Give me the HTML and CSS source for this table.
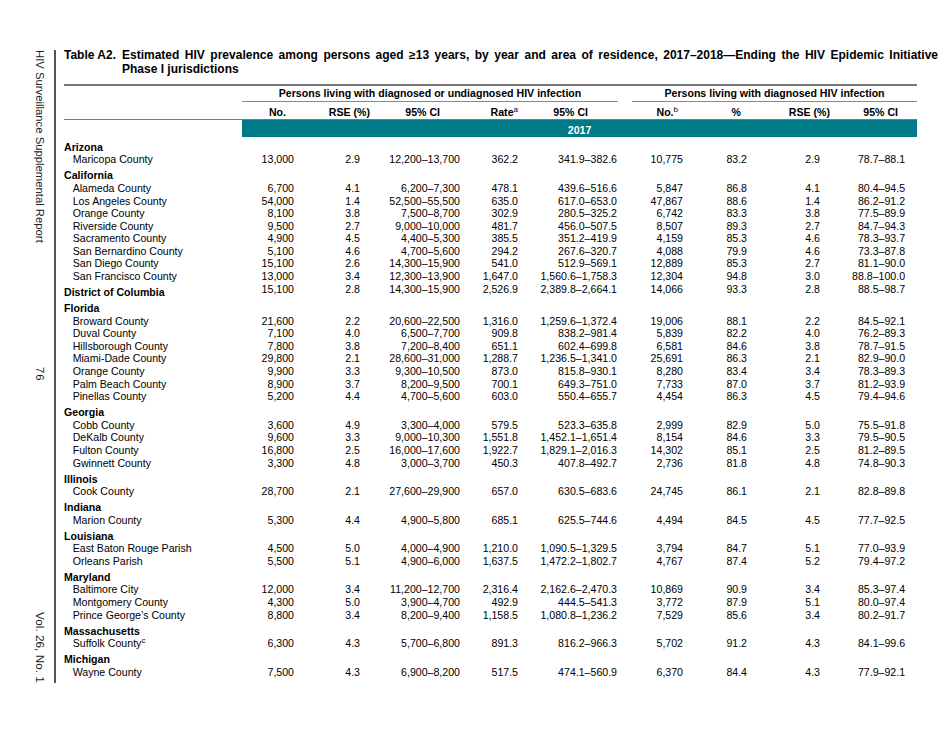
FILE: index.html
```html
<!DOCTYPE html>
<html lang="en">
<head>
<meta charset="utf-8">
<title>Table A2</title>
<link rel="stylesheet" href="styles.css">
</head>
<body>
<div class="page">
  <aside class="sidebar">
    <div class="side-text side-top">HIV Surveillance Supplemental Report</div>
    <div class="side-text side-num">76</div>
    <div class="side-text side-vol">Vol. 26, No. 1</div>
  </aside>
  <main class="main">
    <div class="title">
      <div class="title-label">Table A2.</div>
      <div class="title-text">
        <div class="title-line1">Estimated HIV prevalence among persons aged ≥13 years, by year and area of residence, 2017–2018—Ending the HIV Epidemic Initiative</div>
        <div>Phase I jurisdictions</div>
      </div>
    </div>
    <table class="data">
      <colgroup>
        <col class="w-name"><col class="w1"><col class="w2"><col class="w3"><col class="w4"><col class="w5"><col class="w6"><col class="w7"><col class="w8"><col class="w9">
      </colgroup>
      <thead>
        <tr class="grp-row">
          <th></th>
          <th colspan="5" class="grp grp1"><div>Persons living with diagnosed or undiagnosed HIV infection</div></th>
          <th colspan="4" class="grp grp2"><div>Persons living with diagnosed HIV infection</div></th>
        </tr>
        <tr class="col-row">
          <th></th>
          <th>No.</th>
          <th>RSE (%)</th>
          <th>95% CI</th>
          <th>Rate<sup>a</sup></th>
          <th>95% CI</th>
          <th>No.<sup>b</sup></th>
          <th>%</th>
          <th>RSE (%)</th>
          <th>95% CI</th>
        </tr>
        <tr class="year-row">
          <td></td>
          <td colspan="9" class="year">2017</td>
        </tr>
      </thead>
      <tbody>
        <tr class="state"><th colspan="10">Arizona</th></tr>
        <tr><td>Maricopa County</td><td>13,000</td><td>2.9</td><td>12,200–13,700</td><td>362.2</td><td>341.9–382.6</td><td>10,775</td><td>83.2</td><td>2.9</td><td>78.7–88.1</td></tr>
        <tr class="state"><th colspan="10">California</th></tr>
        <tr><td>Alameda County</td><td>6,700</td><td>4.1</td><td>6,200–7,300</td><td>478.1</td><td>439.6–516.6</td><td>5,847</td><td>86.8</td><td>4.1</td><td>80.4–94.5</td></tr>
        <tr><td>Los Angeles County</td><td>54,000</td><td>1.4</td><td>52,500–55,500</td><td>635.0</td><td>617.0–653.0</td><td>47,867</td><td>88.6</td><td>1.4</td><td>86.2–91.2</td></tr>
        <tr><td>Orange County</td><td>8,100</td><td>3.8</td><td>7,500–8,700</td><td>302.9</td><td>280.5–325.2</td><td>6,742</td><td>83.3</td><td>3.8</td><td>77.5–89.9</td></tr>
        <tr><td>Riverside County</td><td>9,500</td><td>2.7</td><td>9,000–10,000</td><td>481.7</td><td>456.0–507.5</td><td>8,507</td><td>89.3</td><td>2.7</td><td>84.7–94.3</td></tr>
        <tr><td>Sacramento County</td><td>4,900</td><td>4.5</td><td>4,400–5,300</td><td>385.5</td><td>351.2–419.9</td><td>4,159</td><td>85.3</td><td>4.6</td><td>78.3–93.7</td></tr>
        <tr><td>San Bernardino County</td><td>5,100</td><td>4.6</td><td>4,700–5,600</td><td>294.2</td><td>267.6–320.7</td><td>4,088</td><td>79.9</td><td>4.6</td><td>73.3–87.8</td></tr>
        <tr><td>San Diego County</td><td>15,100</td><td>2.6</td><td>14,300–15,900</td><td>541.0</td><td>512.9–569.1</td><td>12,889</td><td>85.3</td><td>2.7</td><td>81.1–90.0</td></tr>
        <tr><td>San Francisco County</td><td>13,000</td><td>3.4</td><td>12,300–13,900</td><td>1,647.0</td><td>1,560.6–1,758.3</td><td>12,304</td><td>94.8</td><td>3.0</td><td>88.8–100.0</td></tr>
        <tr class="dc"><th>District of Columbia</th><td>15,100</td><td>2.8</td><td>14,300–15,900</td><td>2,526.9</td><td>2,389.8–2,664.1</td><td>14,066</td><td>93.3</td><td>2.8</td><td>88.5–98.7</td></tr>
        <tr class="state"><th colspan="10">Florida</th></tr>
        <tr><td>Broward County</td><td>21,600</td><td>2.2</td><td>20,600–22,500</td><td>1,316.0</td><td>1,259.6–1,372.4</td><td>19,006</td><td>88.1</td><td>2.2</td><td>84.5–92.1</td></tr>
        <tr><td>Duval County</td><td>7,100</td><td>4.0</td><td>6,500–7,700</td><td>909.8</td><td>838.2–981.4</td><td>5,839</td><td>82.2</td><td>4.0</td><td>76.2–89.3</td></tr>
        <tr><td>Hillsborough County</td><td>7,800</td><td>3.8</td><td>7,200–8,400</td><td>651.1</td><td>602.4–699.8</td><td>6,581</td><td>84.6</td><td>3.8</td><td>78.7–91.5</td></tr>
        <tr><td>Miami-Dade County</td><td>29,800</td><td>2.1</td><td>28,600–31,000</td><td>1,288.7</td><td>1,236.5–1,341.0</td><td>25,691</td><td>86.3</td><td>2.1</td><td>82.9–90.0</td></tr>
        <tr><td>Orange County</td><td>9,900</td><td>3.3</td><td>9,300–10,500</td><td>873.0</td><td>815.8–930.1</td><td>8,280</td><td>83.4</td><td>3.4</td><td>78.3–89.3</td></tr>
        <tr><td>Palm Beach County</td><td>8,900</td><td>3.7</td><td>8,200–9,500</td><td>700.1</td><td>649.3–751.0</td><td>7,733</td><td>87.0</td><td>3.7</td><td>81.2–93.9</td></tr>
        <tr><td>Pinellas County</td><td>5,200</td><td>4.4</td><td>4,700–5,600</td><td>603.0</td><td>550.4–655.7</td><td>4,454</td><td>86.3</td><td>4.5</td><td>79.4–94.6</td></tr>
        <tr class="state"><th colspan="10">Georgia</th></tr>
        <tr><td>Cobb County</td><td>3,600</td><td>4.9</td><td>3,300–4,000</td><td>579.5</td><td>523.3–635.8</td><td>2,999</td><td>82.9</td><td>5.0</td><td>75.5–91.8</td></tr>
        <tr><td>DeKalb County</td><td>9,600</td><td>3.3</td><td>9,000–10,300</td><td>1,551.8</td><td>1,452.1–1,651.4</td><td>8,154</td><td>84.6</td><td>3.3</td><td>79.5–90.5</td></tr>
        <tr><td>Fulton County</td><td>16,800</td><td>2.5</td><td>16,000–17,600</td><td>1,922.7</td><td>1,829.1–2,016.3</td><td>14,302</td><td>85.1</td><td>2.5</td><td>81.2–89.5</td></tr>
        <tr><td>Gwinnett County</td><td>3,300</td><td>4.8</td><td>3,000–3,700</td><td>450.3</td><td>407.8–492.7</td><td>2,736</td><td>81.8</td><td>4.8</td><td>74.8–90.3</td></tr>
        <tr class="state"><th colspan="10">Illinois</th></tr>
        <tr><td>Cook County</td><td>28,700</td><td>2.1</td><td>27,600–29,900</td><td>657.0</td><td>630.5–683.6</td><td>24,745</td><td>86.1</td><td>2.1</td><td>82.8–89.8</td></tr>
        <tr class="state"><th colspan="10">Indiana</th></tr>
        <tr><td>Marion County</td><td>5,300</td><td>4.4</td><td>4,900–5,800</td><td>685.1</td><td>625.5–744.6</td><td>4,494</td><td>84.5</td><td>4.5</td><td>77.7–92.5</td></tr>
        <tr class="state"><th colspan="10">Louisiana</th></tr>
        <tr><td>East Baton Rouge Parish</td><td>4,500</td><td>5.0</td><td>4,000–4,900</td><td>1,210.0</td><td>1,090.5–1,329.5</td><td>3,794</td><td>84.7</td><td>5.1</td><td>77.0–93.9</td></tr>
        <tr><td>Orleans Parish</td><td>5,500</td><td>5.1</td><td>4,900–6,000</td><td>1,637.5</td><td>1,472.2–1,802.7</td><td>4,767</td><td>87.4</td><td>5.2</td><td>79.4–97.2</td></tr>
        <tr class="state"><th colspan="10">Maryland</th></tr>
        <tr><td>Baltimore City</td><td>12,000</td><td>3.4</td><td>11,200–12,700</td><td>2,316.4</td><td>2,162.6–2,470.3</td><td>10,869</td><td>90.9</td><td>3.4</td><td>85.3–97.4</td></tr>
        <tr><td>Montgomery County</td><td>4,300</td><td>5.0</td><td>3,900–4,700</td><td>492.9</td><td>444.5–541.3</td><td>3,772</td><td>87.9</td><td>5.1</td><td>80.0–97.4</td></tr>
        <tr><td>Prince George’s County</td><td>8,800</td><td>3.4</td><td>8,200–9,400</td><td>1,158.5</td><td>1,080.8–1,236.2</td><td>7,529</td><td>85.6</td><td>3.4</td><td>80.2–91.7</td></tr>
        <tr class="state"><th colspan="10">Massachusetts</th></tr>
        <tr><td>Suffolk County<sup>c</sup></td><td>6,300</td><td>4.3</td><td>5,700–6,800</td><td>891.3</td><td>816.2–966.3</td><td>5,702</td><td>91.2</td><td>4.3</td><td>84.1–99.6</td></tr>
        <tr class="state"><th colspan="10">Michigan</th></tr>
        <tr><td>Wayne County</td><td>7,500</td><td>4.3</td><td>6,900–8,200</td><td>517.5</td><td>474.1–560.9</td><td>6,370</td><td>84.4</td><td>4.3</td><td>77.9–92.1</td></tr>
      </tbody>
    </table>
  </main>
</div>
</body>
</html>
```

FILE: styles.css
```css
* { box-sizing: border-box; }

html, body {
  margin: 0;
  padding: 0;
  background: #fff;
}

body {
  font-family: "Liberation Sans", Arial, sans-serif;
  color: #000;
}

.page {
  display: flex;
  align-items: flex-start;
}

/* Left running header */
.sidebar {
  margin: 50px 0 0 22px;
  width: 33.5px;
  height: 633px;
  border-right: 2px solid #555;
  display: flex;
  flex-direction: column;
  align-items: center;
  font-size: 11.3px;
  color: #222;
}

.side-text {
  writing-mode: vertical-rl;
  line-height: 11.6px;
  white-space: nowrap;
  padding-left: 3px;
}

.side-num {
  margin-top: 124px;
  letter-spacing: 1px;
}

.side-vol {
  margin-top: auto;
  font-size: 11.8px;
}

/* Main column */
.main {
  margin: 48px 0 0 8.5px;
}

.title {
  display: flex;
  font-size: 12px;
  line-height: 14px;
  font-weight: bold;
}

.title-label {
  width: 58px;
  flex: none;
}

.title-text {
  width: 816px;
}

.title-line1 {
  text-align: justify;
  text-align-last: justify;
}

/* Table */
.data {
  margin-top: 8px;
  width: 853px;
  table-layout: fixed;
  border-collapse: separate;
  border-spacing: 0;
  border-top: 2px solid #777;
  font-size: 10.6px;
  line-height: 12.6px;
}

.w-name { width: 178px; }
.w1 { width: 78px; }
.w2 { width: 65px; }
.w3 { width: 85px; }
.w4 { width: 58px; }
.w5 { width: 97px; }
.w6 { width: 70px; }
.w7 { width: 65px; }
.w8 { width: 75px; }
.w9 { width: 82px; }

.data th, .data td {
  padding: 0;
  vertical-align: top;
  white-space: nowrap;
}

.data th { font-weight: bold; }

sup {
  font-size: 8px;
  line-height: 0;
  vertical-align: 4px;
  font-weight: normal;
}

/* group header */
.grp-row th { padding-top: 1px; text-align: center; }
.grp div {
  padding-bottom: 1.2px;
  border-bottom: 1.5px solid #888;
}
.grp1 div { margin-right: 7px; }
.grp2 div { margin-left: 7px; }

/* column header */
.col-row th {
  padding-top: 4.6px;
  border-bottom: 1.5px solid #777;
  text-align: right;
}
.col-row th:nth-child(2)  { padding-right: 34px; }
.col-row th:nth-child(3)  { padding-right: 15px; }
.col-row th:nth-child(4)  { padding-right: 30px; }
.col-row th:nth-child(5)  { padding-right: 10px; }
.col-row th:nth-child(6)  { padding-right: 37px; }
.col-row th:nth-child(7)  { padding-right: 17px; }
.col-row th:nth-child(8)  { padding-right: 19px; }
.col-row th:nth-child(9)  { padding-right: 5px; }
.col-row th:nth-child(10) { padding-right: 19px; }

/* year bar */
.year-row td.year {
  background: #007a87;
  color: #fff;
  font-weight: bold;
  text-align: center;
  padding: 3.6px 0 1.2px;
}

/* body rows */
tbody td { text-align: right; }
tbody td:first-child {
  text-align: left;
  padding-left: 8.7px;
}
tbody td:nth-child(2)  { padding-right: 26px; }
tbody td:nth-child(3)  { padding-right: 25px; }
tbody td:nth-child(4)  { padding-right: 10px; }
tbody td:nth-child(5)  { padding-right: 10px; }
tbody td:nth-child(6)  { padding-right: 8px; }
tbody td:nth-child(7)  { padding-right: 12px; }
tbody td:nth-child(8)  { padding-right: 13px; }
tbody td:nth-child(9)  { padding-right: 15px; }
tbody td:nth-child(10) { padding-right: 12px; }

tbody tr.state th,
tbody tr.dc th {
  text-align: left;
  padding-top: 3.4px;
}
```
